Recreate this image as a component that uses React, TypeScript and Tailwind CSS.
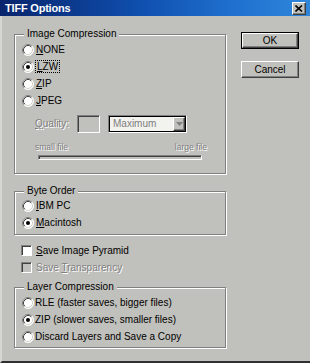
import React from "react";

function Radio({ checked = false }: { checked?: boolean }) {
  return (
    <svg width="12" height="12" viewBox="0 0 12 12" className="shrink-0">
      <circle cx="6" cy="6" r="5.5" fill="#ffffff" />
      <path d="M2.11 9.89A5.5 5.5 0 0 1 9.89 2.11" stroke="#808080" fill="none" />
      <path d="M9.89 2.11A5.5 5.5 0 0 1 2.11 9.89" stroke="#ffffff" fill="none" />
      <path d="M2.82 9.18A4.5 4.5 0 0 1 9.18 2.82" stroke="#404040" fill="none" />
      <path d="M9.18 2.82A4.5 4.5 0 0 1 2.82 9.18" stroke="#d4d0c8" fill="none" />
      {checked && <circle cx="6" cy="6" r="2" fill="#000000" />}
    </svg>
  );
}

function Check({ disabled = false }: { disabled?: boolean }) {
  return (
    <span
      className={
        disabled
          ? "block w-[11px] h-[11px] shrink-0 border border-t-[#808080] border-l-[#808080] border-r-white border-b-white shadow-[inset_1px_1px_0_#404040] bg-[#c0c0bc]"
          : "block w-[11px] h-[11px] shrink-0 border border-t-[#808080] border-l-[#808080] border-r-white border-b-white shadow-[inset_1px_1px_0_#404040] bg-white"
      }
    />
  );
}

function Group({
  title,
  className,
  children,
}: {
  title: string;
  className?: string;
  children: React.ReactNode;
}) {
  return (
    <fieldset
      className={
        "m-0 p-0 min-w-0 border border-[#808080] shadow-[inset_1px_1px_0_#fff,1px_1px_0_#fff] " +
        (className ?? "")
      }
    >
      <legend className="ml-[9px] px-[3px] h-[12px] leading-[12px] bg-[#c0c0bc]">{title}</legend>
      {children}
    </fieldset>
  );
}

function RadioRow({
  checked = false,
  children,
  tight = false,
}: {
  checked?: boolean;
  children: React.ReactNode;
  tight?: boolean;
}) {
  return (
    <div className={tight ? "h-[17px] flex items-center pl-[7px] gap-[1px]" : "h-[17px] flex items-center pl-[7px] gap-[2px]"}>
      <Radio checked={checked} />
      <span className="leading-[12px] whitespace-nowrap">{children}</span>
    </div>
  );
}

const disabledText = "text-[#808080] [text-shadow:1px_1px_0_#ffffff]";

function Button({ children, isDefault = false }: { children: React.ReactNode; isDefault?: boolean }) {
  const inner = (
    <div className="h-full w-full border border-t-white border-l-white border-r-[#404040] border-b-[#404040] shadow-[inset_-1px_-1px_0_#808080] flex items-center justify-center leading-[12px]">
      {children}
    </div>
  );
  return isDefault ? (
    <div className="w-[58px] h-[17px] border border-black">{inner}</div>
  ) : (
    <div className="w-[58px] h-[17px]">{inner}</div>
  );
}

export default function App() {
  return (
    <div className="w-[310px] h-[363px] bg-[#c0c0bc] flex flex-col overflow-hidden font-['Liberation_Sans',Arial,sans-serif] text-[10px] text-black select-none">
      {/* Title bar */}
      <div className="h-[16px] shrink-0 flex items-center justify-between bg-[linear-gradient(to_right,#08246c,#0f4fae_45%,#1f70cf_75%,#2f86da)]">
        <span className="pl-[5px] text-white font-bold text-[11px] leading-[14px] tracking-[-0.2px]">TIFF Options</span>
        <div className="mr-[4px] mt-[1px] w-[14px] h-[13px] bg-[#c0c0bc] border border-t-white border-l-white border-r-[#404040] border-b-[#404040] shadow-[inset_-1px_-1px_0_#808080] flex items-center justify-center">
          <svg width="8" height="7" viewBox="0 0 8 7">
            <path d="M0.5 0.5L7 6.5M7 0.5L0.5 6.5" stroke="#000" strokeWidth="1.6" />
          </svg>
        </div>
      </div>

      {/* Body */}
      <div className="flex-1 flex gap-[15px] pl-[12px] pt-[12px] border-l-2 border-l-[#d6d6d2] border-b-2 border-b-[#303030]">
        {/* Left column */}
        <div className="w-[212px] flex flex-col">
          <Group title="Image Compression" className="pb-[13px]">
            <div className="pt-[1px]">
              <RadioRow>
                <u>N</u>ONE
              </RadioRow>
              <RadioRow checked>
                <span className="px-[1px] outline outline-1 outline-dotted outline-black">
                  <u>L</u>ZW
                </span>
              </RadioRow>
              <RadioRow>
                <u>Z</u>IP
              </RadioRow>
              <RadioRow>
                <u>J</u>PEG
              </RadioRow>
            </div>
            <div className="mt-[6px] h-[18px] flex items-center pl-[20px]">
              <span className={"w-[42px] leading-[12px] " + disabledText}>
                <u>Q</u>uality:
              </span>
              <div className="w-[23px] h-[18px] border border-t-[#808080] border-l-[#808080] border-r-white border-b-white shadow-[inset_1px_1px_0_#404040] bg-[#c0c0bc]" />
              <div className="ml-[8px] w-[79px] h-[18px] border border-t-[#808080] border-l-[#808080] border-r-white border-b-white">
                <div className="h-full border border-black bg-[#f2f2ee] flex items-center">
                  <span className="flex-1 pl-[3px] leading-[12px] text-[#808080]">Maximum</span>
                  <div className="w-[12px] h-[14px] bg-[#c0c0bc] border border-t-white border-l-white border-r-[#404040] border-b-[#404040] shadow-[inset_-1px_-1px_0_#808080] flex items-center justify-center">
                    <svg width="7" height="4" viewBox="0 0 7 4">
                      <path d="M0 0H7L3.5 4Z" fill="#808080" />
                    </svg>
                  </div>
                </div>
              </div>
            </div>
            <div className="mt-[9px] h-[10px] flex justify-between pl-[20px] pr-[18px] text-[8.5px] leading-[10px]">
              <span className={disabledText}>small file</span>
              <span className={disabledText}>large file</span>
            </div>
            <div className="ml-[23px] mt-[3px] w-[164px] h-[5px] border border-t-[#808080] border-l-[#808080] border-r-white border-b-white shadow-[inset_1px_1px_0_#404040] bg-[#c0c0bc]" />
          </Group>

          <Group title="Byte Order" className="mt-[11px] pb-[3px]">
            <RadioRow>
              <u>I</u>BM PC
            </RadioRow>
            <RadioRow checked>
              <u>M</u>acintosh
            </RadioRow>
          </Group>

          <div className="mt-[7px]">
            <div className="h-[17px] flex items-center pl-[7px] gap-[4px]">
              <Check />
              <span className="leading-[12px]">
                <u>S</u>ave Image Pyramid
              </span>
            </div>
            <div className="h-[17px] flex items-center pl-[7px] gap-[4px]">
              <Check disabled />
              <span className={"leading-[12px] " + disabledText}>
                Save <u>T</u>ransparency
              </span>
            </div>
          </div>

          <Group title="Layer Compression" className="mt-[5px] pb-[2px]">
            <div className="pt-[1px]">
              <RadioRow tight>RLE (faster saves, bigger files)</RadioRow>
              <RadioRow tight checked>
                ZIP (slower saves, smaller files)
              </RadioRow>
              <RadioRow tight>Discard Layers and Save a Copy</RadioRow>
            </div>
          </Group>
        </div>

        {/* Right column */}
        <div className="w-[58px] flex flex-col gap-[12px] mt-[4px]">
          <Button isDefault>OK</Button>
          <Button>Cancel</Button>
        </div>
      </div>
    </div>
  );
}
